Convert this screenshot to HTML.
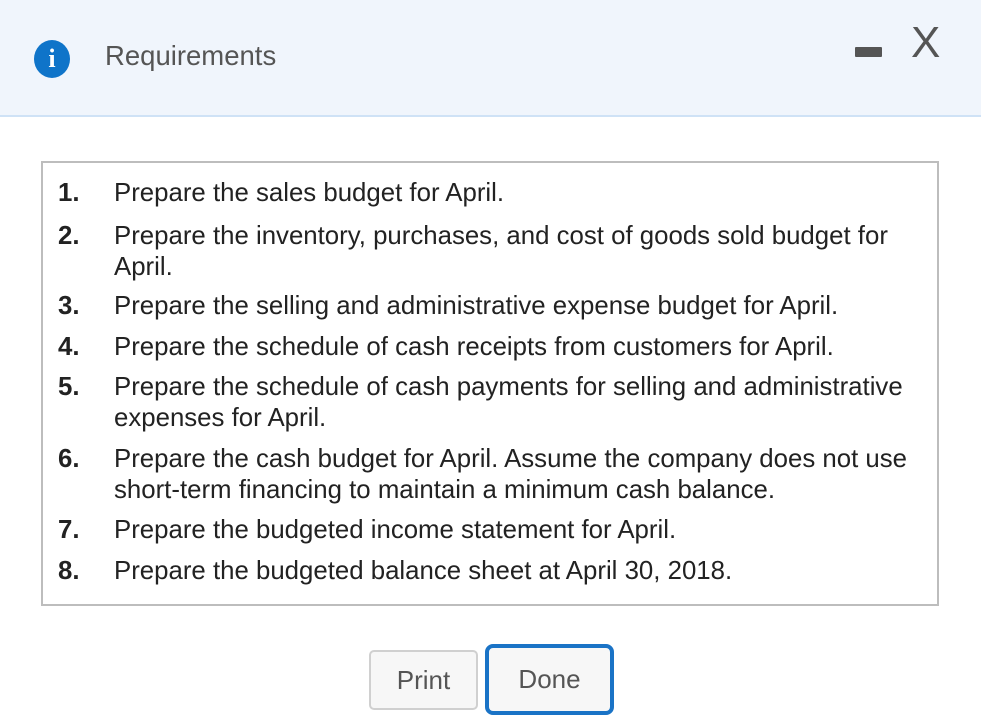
<!DOCTYPE html>
<html><head><style>
body{margin:0;width:981px;height:727px;background:#fff;font-family:"Liberation Sans",sans-serif;position:relative;overflow:hidden}
.hdr{position:absolute;left:0;top:0;width:981px;height:115px;background:#f0f5fc;border-bottom:2px solid #cfe2f6}
.ic{position:absolute;left:34px;top:40px;width:36px;height:38px;border-radius:50%;background:#0f74c9;color:#fff;font:bold 26px "Liberation Serif",serif;text-align:center;line-height:38px}
.title{position:absolute;left:105px;top:40px;font-size:27.5px;color:#555}
.min{position:absolute;left:855px;top:47px;width:27px;height:10px;background:#555;border-radius:1px}
.x{position:absolute;left:911px;top:18px;font-size:44px;color:#555}
.box{position:absolute;left:41px;top:161px;width:894px;height:441px;border:2px solid #bdbdbd}
.it{position:absolute;left:15px;font-size:25.8px;color:#222;line-height:31px}
.it b{position:absolute;left:0;width:50px}
.it span{display:block;margin-left:56px;width:815px}
.btn{position:absolute;background:#f7f7f7;color:#555;font-size:26px;text-align:center;box-sizing:border-box}
</style></head><body>
<div class="hdr"><div class="ic">i</div><div class="title">Requirements</div><div class="min"></div><div class="x">X</div></div>
<div class="box">
<div class="it" style="top:15px"><b>1.</b><span>Prepare the sales budget for April.</span></div>
<div class="it" style="top:58px"><b>2.</b><span>Prepare the inventory, purchases, and cost of goods sold budget for April.</span></div>
<div class="it" style="top:128px"><b>3.</b><span>Prepare the selling and administrative expense budget for April.</span></div>
<div class="it" style="top:169px"><b>4.</b><span>Prepare the schedule of cash receipts from customers for April.</span></div>
<div class="it" style="top:209px"><b>5.</b><span>Prepare the schedule of cash payments for selling and administrative expenses for April.</span></div>
<div class="it" style="top:281px"><b>6.</b><span>Prepare the cash budget for April. Assume the company does not use short&#8209;term financing to maintain a minimum cash balance.</span></div>
<div class="it" style="top:352px"><b>7.</b><span>Prepare the budgeted income statement for April.</span></div>
<div class="it" style="top:393px"><b>8.</b><span>Prepare the budgeted balance sheet at April 30, 2018.</span></div>
</div>
<div class="btn" style="left:369px;top:650px;width:109px;height:60px;border:2px solid #d0d0d0;border-radius:5px;line-height:56px">Print</div>
<div class="btn" style="left:485px;top:644px;width:129px;height:71px;border:4px solid #1a73c6;border-radius:8px;line-height:63px">Done</div>
</body></html>
